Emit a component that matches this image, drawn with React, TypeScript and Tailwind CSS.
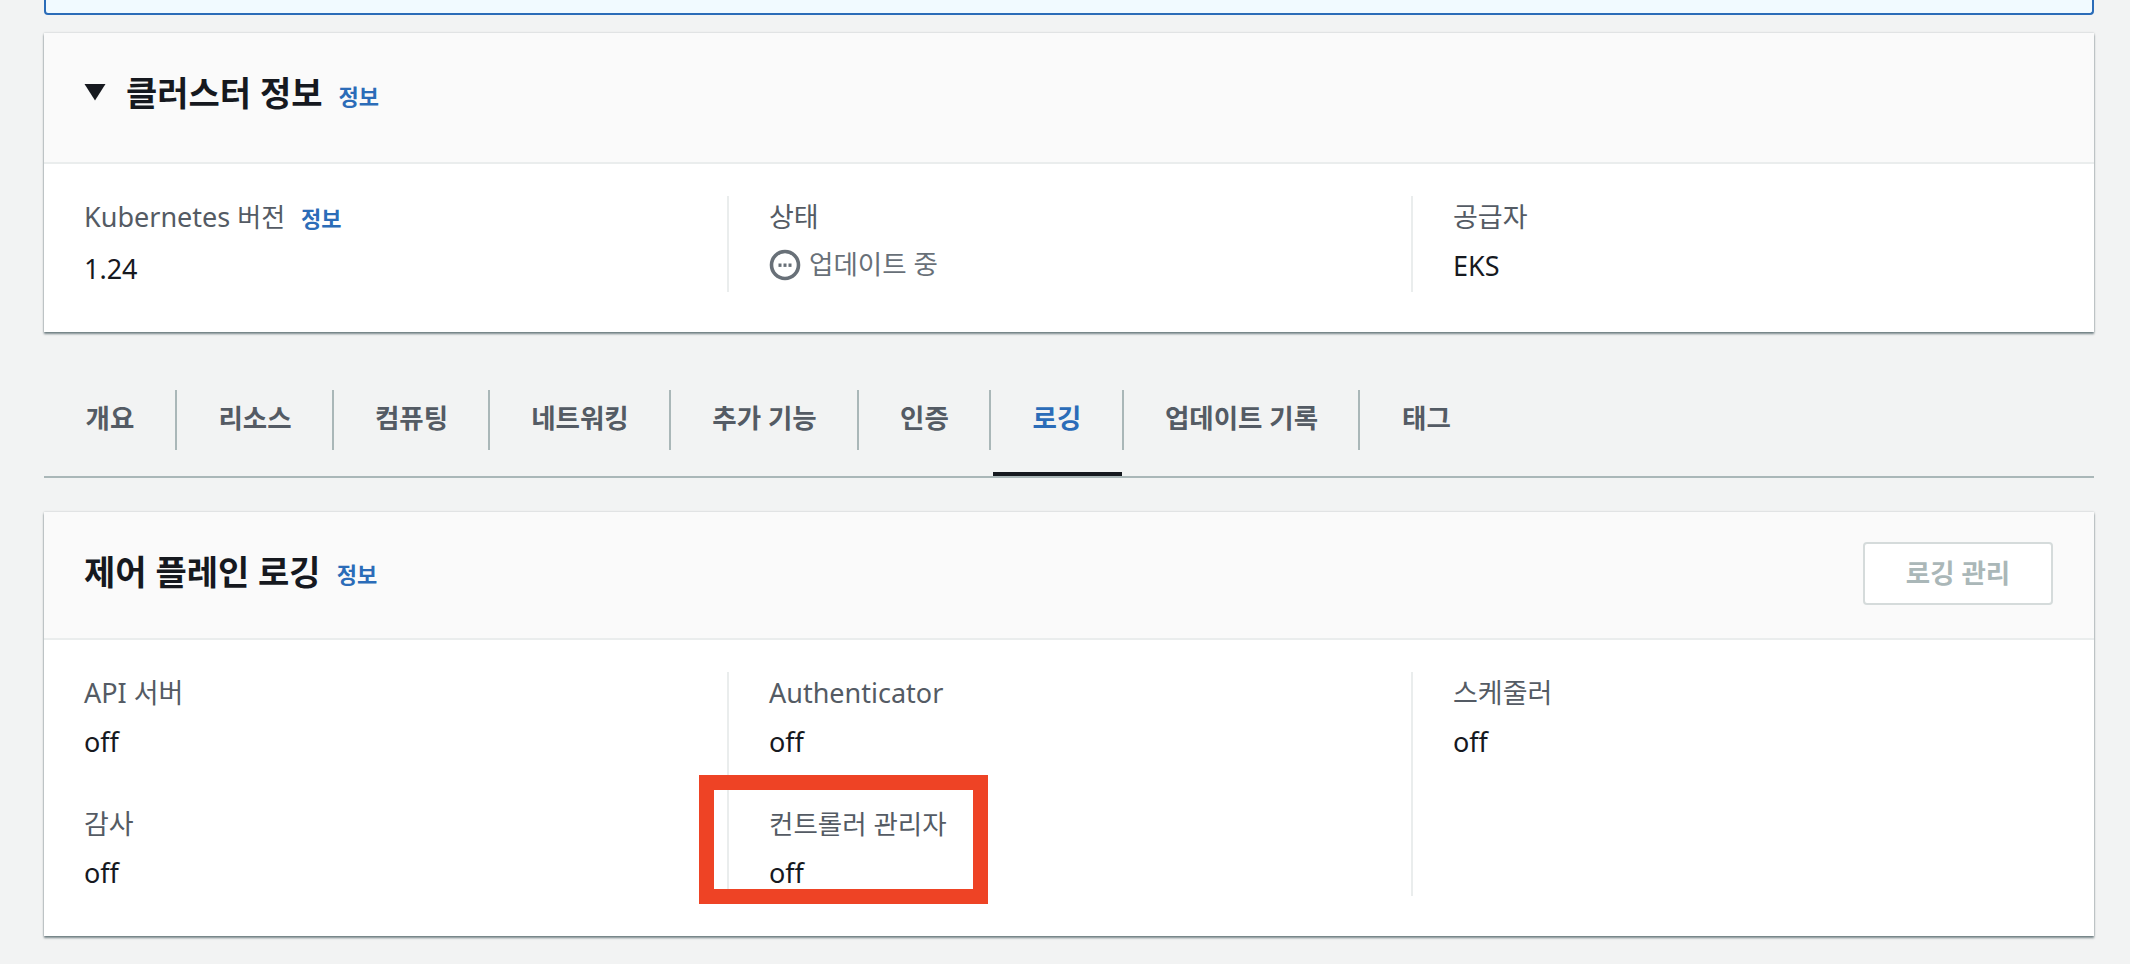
const sans = 'font-["Noto_Sans","Noto_Sans_CJK_KR",sans-serif]';

function InfoLink({ className }: { className: string }) {
  return <a className={`font-bold text-[#2b6cb8] ${className}`}>정보</a>;
}

function Field({ label, value, tall }: { label: React.ReactNode; value: React.ReactNode; tall?: boolean }) {
  return (
    <div className={tall ? "h-[131px]" : ""}>
      <div className="h-[40px] whitespace-nowrap text-[27px] leading-[40px] text-[#545b64]">{label}</div>
      <div className="mt-[9px] h-[40px] text-[27px] leading-[40px] text-[#16191f]">{value}</div>
    </div>
  );
}

const tabs: [string, string][] = [
  ["개요", "w-[131px]"],
  ["리소스", "w-[157px]"],
  ["컴퓨팅", "w-[156px]"],
  ["네트워킹", "w-[181px]"],
  ["추가 기능", "w-[188px]"],
  ["인증", "w-[132px]"],
  ["로깅", "w-[133px]"],
  ["업데이트 기록", "w-[236px]"],
  ["태그", "w-[134px]"],
];

function StatusIcon() {
  return (
    <svg width="32" height="32" viewBox="0 0 32 32" className="mt-[2px] shrink-0">
      <circle cx="16" cy="16" r="13.5" fill="none" stroke="#687078" strokeWidth="3.6" />
      <rect x="9.5" y="14.5" width="3" height="3.4" fill="#687078" />
      <rect x="14.5" y="14.5" width="3" height="3.4" fill="#687078" />
      <rect x="19.5" y="14.5" width="3" height="3.4" fill="#687078" />
    </svg>
  );
}

export default function App() {
  return (
    <div className={`relative h-[964px] w-[2130px] overflow-hidden bg-[#f2f3f3] ${sans}`}>
      <div className="ml-[44px] mr-[36px] h-[15px] rounded-b-[4px] border-x-2 border-b-2 border-[#2b6cb8] bg-[#f1faff]" />

      <section className="ml-[44px] mr-[36px] mt-[18px] h-[299px] bg-white shadow-[0_2px_2px_rgba(0,28,36,0.5),0_0_2px_rgba(0,28,36,0.2)]">
        <div className="flex h-[131px] items-center border-b-2 border-[#eaeded] bg-[#fafafa] pb-[9px] pl-[40px]">
          <svg width="22" height="18" viewBox="0 0 22 18" className="mr-[20px] mt-[-2px]">
            <path d="M0.5 1H21.5L11 17.5Z" fill="#16191f" />
          </svg>
          <h2 className="text-[34px] font-bold leading-[44px] text-[#16191f]">클러스터 정보</h2>
          <InfoLink className="ml-[16px] mt-[6px] text-[22px]" />
        </div>
        <div className="flex pt-[32px] pl-[40px]">
          <div className="h-[96px] w-[643px] pt-[1px]">
            <div className="h-[40px] whitespace-nowrap text-[27px] leading-[40px] text-[#545b64]">
              Kubernetes <span className="text-[26px]">버전</span> <InfoLink className="ml-[9px] text-[22px]" />
            </div>
            <div className="mt-[12px] h-[40px] text-[27px] leading-[40px] text-[#16191f]">1.24</div>
          </div>
          <div className="h-[96px] w-[684px] border-l-2 border-[#eaeded] pl-[40px] pt-[1px]">
            <div className="h-[40px] text-[27px] leading-[40px] text-[#545b64]">상태</div>
            <div className="mt-[7px] flex h-[40px] items-center gap-[8px] text-[26.5px] leading-[40px] text-[#687078]">
              <StatusIcon />
              <span>업데이트 중</span>
            </div>
          </div>
          <div className="h-[96px] border-l-2 border-[#eaeded] pl-[40px] pt-[1px]">
            <div className="h-[40px] text-[27px] leading-[40px] text-[#545b64]">공급자</div>
            <div className="mt-[9px] h-[40px] text-[27px] leading-[40px] text-[#16191f]">EKS</div>
          </div>
        </div>
      </section>

      <nav className="ml-[44px] mr-[36px] mt-[58px] flex h-[88px] border-b-2 border-[#aab7b8]">
        {tabs.map(([t, w], i) => (
          <div key={t} className={`relative h-[60px] ${w} ${i > 0 ? "border-l-2 border-[#aab7b8]" : ""} flex items-center justify-center pb-[2px] pl-[1px] text-[26.5px] font-bold ${t === "로깅" ? "text-[#2b6cb8]" : "text-[#545b64]"}`}>
            {t}
            {t === "로깅" && <span className="absolute bottom-[-26px] left-[2px] right-[0px] h-[4px] bg-[#16191f]" />}
          </div>
        ))}
      </nav>

      <section className="ml-[44px] mr-[36px] mt-[34px] h-[424px] bg-white shadow-[0_2px_2px_rgba(0,28,36,0.5),0_0_2px_rgba(0,28,36,0.2)]">
        <div className="flex h-[128px] items-center border-b-2 border-[#eaeded] bg-[#fafafa] pl-[40px] pr-[41px]">
          <h2 className="mb-[7px] text-[34px] font-bold leading-[44px] text-[#16191f]">제어 플레인 로깅</h2>
          <InfoLink className="mb-[1px] ml-[16px] text-[22px]" />
          <button className="mb-[3px] ml-auto h-[63px] w-[190px] rounded-[4px] border-2 border-[#d5dbdb] bg-white text-[26.5px] font-bold text-[#aab7b8]">
            로깅 관리
          </button>
        </div>
        <div className="flex pl-[40px]">
          <div className="mt-[32px] h-[224px] w-[643px] pt-[1px]">
            <Field tall label="API 서버" value="off" />
            <Field label="감사" value="off" />
          </div>
          <div className="mt-[32px] h-[224px] w-[684px] border-l-2 border-[#eaeded] pl-[40px] pt-[1px]">
            <Field tall label="Authenticator" value="off" />
            <Field label={<span className="text-[26.5px]">컨트롤러 관리자</span>} value="off" />
          </div>
          <div className="mt-[32px] h-[224px] border-l-2 border-[#eaeded] pl-[40px] pt-[1px]">
            <Field label="스케줄러" value="off" />
          </div>
        </div>
      </section>

      <div className="absolute left-[699px] top-[775px] h-[129px] w-[289px] border-[15px] border-[#ee4325]" />
    </div>
  );
}
